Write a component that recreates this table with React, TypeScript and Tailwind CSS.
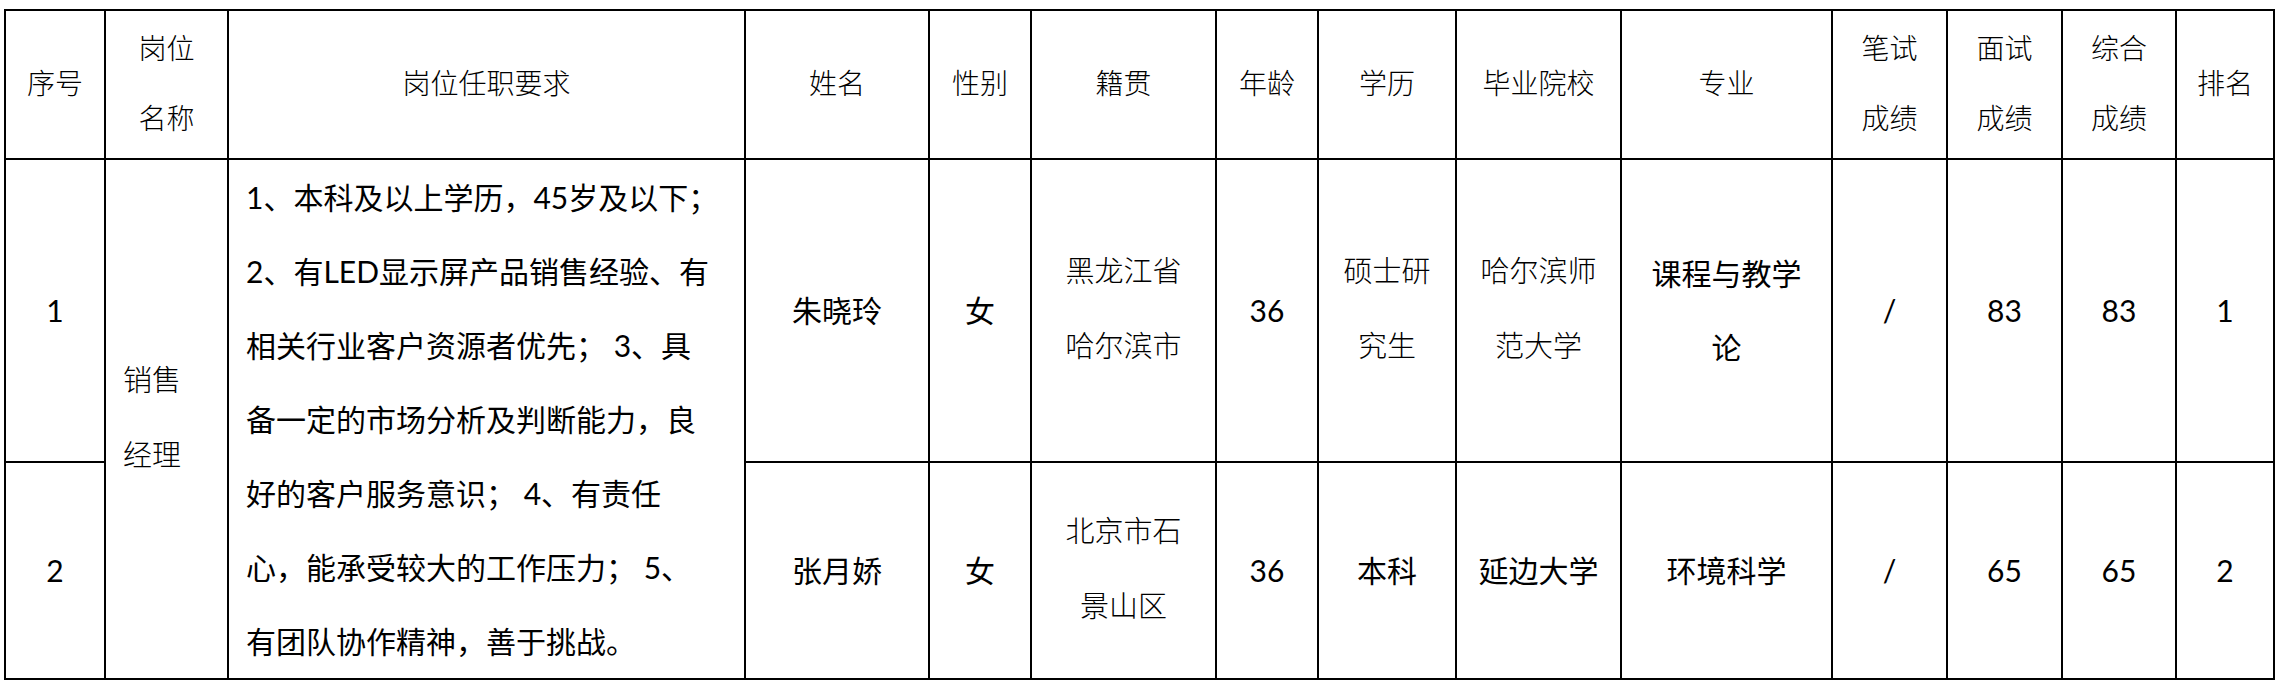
const SERIF_HEAD =
  "font-['Liberation_Serif','Noto_Sans_CJK_SC',serif] text-[28px] font-light leading-[70px]";
const SERIF_BODY =
  "font-['Liberation_Serif','Noto_Sans_CJK_SC',serif] text-[29px] font-light leading-[75px]";
const SANS_BODY =
  "font-['Lato','Noto_Sans_CJK_SC',sans-serif] text-[30px] font-normal leading-[74px]";

const td = "border-2 border-black text-center align-middle p-0 whitespace-nowrap";

const widths = [
  "w-[100px]",
  "w-[123px]",
  "w-[517px]",
  "w-[184px]",
  "w-[102px]",
  "w-[185px]",
  "w-[102px]",
  "w-[138px]",
  "w-[165px]",
  "w-[211px]",
  "w-[115px]",
  "w-[115px]",
  "w-[114px]",
  "w-[98px]",
];

const requirement = [
  "1、本科及以上学历，45岁及以下；",
  "2、有LED显示屏产品销售经验、有",
  "相关行业客户资源者优先； 3、具",
  "备一定的市场分析及判断能力，良",
  "好的客户服务意识； 4、有责任",
  "心，能承受较大的工作压力； 5、",
  "有团队协作精神，善于挑战。",
];

type Row = {
  no: string;
  name: string;
  sex: string;
  origin: string[];
  age: string;
  degree: { lines: string[]; serif: boolean };
  school: { lines: string[]; serif: boolean };
  major: string[];
  written: string;
  interview: string;
  total: string;
  rank: string;
  height: string;
};

const rows: Row[] = [
  {
    no: "1",
    name: "朱晓玲",
    sex: "女",
    origin: ["黑龙江省", "哈尔滨市"],
    age: "36",
    degree: { lines: ["硕士研", "究生"], serif: true },
    school: { lines: ["哈尔滨师", "范大学"], serif: true },
    major: ["课程与教学", "论"],
    written: "/",
    interview: "83",
    total: "83",
    rank: "1",
    height: "h-[302px]",
  },
  {
    no: "2",
    name: "张月娇",
    sex: "女",
    origin: ["北京市石", "景山区"],
    age: "36",
    degree: { lines: ["本科"], serif: false },
    school: { lines: ["延边大学"], serif: false },
    major: ["环境科学"],
    written: "/",
    interview: "65",
    total: "65",
    rank: "2",
    height: "h-[217px]",
  },
];

const Lines = ({ lines }: { lines: string[] }) => (
  <>
    {lines.map((l, i) => (
      <div key={i}>{l}</div>
    ))}
  </>
);

export default function App() {
  return (
    <div className="min-h-screen bg-white pt-[9px] pl-[4px] text-black">
      <table className="table-fixed border-collapse w-[2271px]">
        <colgroup>
          {widths.map((w, i) => (
            <col key={i} className={w} />
          ))}
        </colgroup>
        <thead>
          <tr className={`h-[149px] ${SERIF_HEAD}`}>
            <th className={`${td} font-light`}>序号</th>
            <th className={`${td} font-light`}>
              <Lines lines={["岗位", "名称"]} />
            </th>
            <th className={`${td} font-light`}>岗位任职要求</th>
            <th className={`${td} font-light`}>姓名</th>
            <th className={`${td} font-light`}>性别</th>
            <th className={`${td} font-light`}>籍贯</th>
            <th className={`${td} font-light`}>年龄</th>
            <th className={`${td} font-light`}>学历</th>
            <th className={`${td} font-light`}>毕业院校</th>
            <th className={`${td} font-light`}>专业</th>
            <th className={`${td} font-light`}>
              <Lines lines={["笔试", "成绩"]} />
            </th>
            <th className={`${td} font-light`}>
              <Lines lines={["面试", "成绩"]} />
            </th>
            <th className={`${td} font-light`}>
              <Lines lines={["综合", "成绩"]} />
            </th>
            <th className={`${td} font-light`}>排名</th>
          </tr>
        </thead>
        <tbody>
          {rows.map((r, idx) => (
            <tr key={r.no} className={r.height}>
              <td className={`${td} ${SANS_BODY}`}>{r.no}</td>
              {idx === 0 && (
                <>
                  <td rowSpan={2} className={`${td} ${SERIF_BODY} text-left pl-[17px]`}>
                    <Lines lines={["销售", "经理"]} />
                  </td>
                  <td rowSpan={2} className={`${td} ${SANS_BODY} text-left pl-[17px]`}>
                    <Lines lines={requirement} />
                  </td>
                </>
              )}
              <td className={`${td} ${SANS_BODY}`}>{r.name}</td>
              <td className={`${td} ${SANS_BODY}`}>{r.sex}</td>
              <td className={`${td} ${SERIF_BODY}`}>
                <Lines lines={r.origin} />
              </td>
              <td className={`${td} ${SANS_BODY}`}>{r.age}</td>
              <td className={`${td} ${r.degree.serif ? SERIF_BODY : SANS_BODY}`}>
                <Lines lines={r.degree.lines} />
              </td>
              <td className={`${td} ${r.school.serif ? SERIF_BODY : SANS_BODY}`}>
                <Lines lines={r.school.lines} />
              </td>
              <td className={`${td} ${SANS_BODY}`}>
                <Lines lines={r.major} />
              </td>
              <td className={`${td} ${SANS_BODY}`}>{r.written}</td>
              <td className={`${td} ${SANS_BODY}`}>{r.interview}</td>
              <td className={`${td} ${SANS_BODY}`}>{r.total}</td>
              <td className={`${td} ${SANS_BODY}`}>{r.rank}</td>
            </tr>
          ))}
        </tbody>
      </table>
    </div>
  );
}
